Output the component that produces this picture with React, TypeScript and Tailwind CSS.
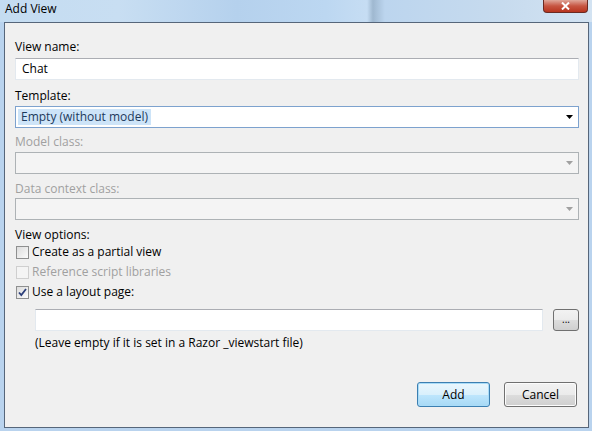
import React from "react";

const font = { fontFamily: '"Open Sans", "Noto Sans", sans-serif' };

const Label = ({ text, disabled }: { text: string; disabled?: boolean }) => (
  <div className={`h-[16px] leading-[16px] text-[12px] ${disabled ? "text-[#a0a0a0]" : "text-black"}`}>{text}</div>
);

const Arrow = ({ disabled }: { disabled?: boolean }) => (
  <svg width="7" height="4" viewBox="0 0 7 4" className="mr-[5px]">
    <path d="M0 0h7L3.5 4z" fill={disabled ? "#a0a0a0" : "#000"} />
  </svg>
);

const CheckBox = ({ checked, disabled }: { checked?: boolean; disabled?: boolean }) => (
  <div
    className={`w-[13px] h-[13px] border flex items-center justify-center ${
      disabled
        ? "border-[#cfcfcf] bg-[#f4f4f4]"
        : "border-[#8e8f8f] bg-[linear-gradient(135deg,#dcdcdc,#fbfbfb)]"
    }`}
  >
    {checked && (
      <svg width="9" height="9" viewBox="0 0 9 9">
        <path d="M1 4.5l2.3 2.6L8 1" stroke="#2c3f7a" strokeWidth="1.8" fill="none" />
      </svg>
    )}
  </div>
);

const App = () => {
  return (
    <div style={font} className="w-[592px] h-[431px] overflow-hidden flex flex-col bg-[#b9d3ee]">
      {/* title bar */}
      <div className="h-[22px] relative bg-[linear-gradient(90deg,#c4dcf1_0%,#c8def2_20%,#b5d1ed_40%,#bcd7f1_55%,#c6ddf3_62%,#9fb8d0_63%,#bcd5ee_65%,#c7dbee_85%,#d3e3f2_100%)]">
        <div className="absolute left-[5px] top-[1px] text-[12px] leading-[16px] text-black">Add View</div>
        <div className="absolute right-[4px] top-0 w-[45px] h-[13px] rounded-b-[4px] border border-t-0 border-[#6b2a22] bg-[linear-gradient(180deg,#e0a79a,#c75542_50%,#b8351f)] flex items-center justify-center">
          <svg width="9" height="8" viewBox="0 0 9 8">
            <path d="M1 0.5l7 7M8 0.5l-7 7" stroke="#fff" strokeWidth="2" />
          </svg>
        </div>
      </div>
      {/* client area */}
      <div className="ml-[4px] mr-[3px] h-[406px] border border-[#56667a] bg-[#f0f0f0] pl-[10px] pr-[9px] pt-[16px] text-[12px]">
        <Label text="View name:" />
        <div className="mt-[3px] h-[22px] border border-[#e3e9ef] border-t-[#abadb3] bg-white flex items-center pl-[6px] text-black">
          Chat
        </div>

        <div className="mt-[8px]">
          <Label text="Template:" />
        </div>
        <div className="mt-[2px] h-[22px] border border-[#7da2ce] bg-white flex items-center justify-between pl-[2px]">
          <span className="bg-[#cde4f8] text-[#1d3a5c] px-[3px] leading-[16px]">Empty (without model)</span>
          <Arrow />
        </div>

        <div className="mt-[6px]">
          <Label text="Model class:" disabled />
        </div>
        <div className="mt-[2px] h-[22px] border border-[#adb2b5] bg-[#f4f4f4] flex items-center justify-end">
          <Arrow disabled />
        </div>

        <div className="mt-[7px]">
          <Label text="Data context class:" disabled />
        </div>
        <div className="mt-[1px] h-[22px] border border-[#adb2b5] bg-[#f4f4f4] flex items-center justify-end">
          <Arrow disabled />
        </div>

        <div className="mt-[7px]">
          <Label text="View options:" />
        </div>
        <div className="mt-[2px] flex flex-col gap-[6px] pl-[1px]">
          <div className="flex items-center gap-[3px] h-[14px]">
            <CheckBox />
            <span>Create as a partial view</span>
          </div>
          <div className="flex items-center gap-[3px] h-[14px]">
            <CheckBox disabled />
            <span className="text-[#a0a0a0]">Reference script libraries</span>
          </div>
          <div className="flex items-center gap-[3px] h-[14px]">
            <CheckBox checked />
            <span>Use a layout page:</span>
          </div>
        </div>

        <div className="mt-[10px] pl-[20px] flex items-center gap-[10px]">
          <div className="flex-1 h-[22px] border border-[#e3e9ef] border-t-[#abadb3] bg-white" />
          <div className="w-[26px] h-[22px] rounded-[3px] border border-[#707070] bg-[linear-gradient(180deg,#f2f2f2_0%,#ebebeb_50%,#dddddd_51%,#cfcfcf_100%)] flex items-center justify-center text-[10px] leading-[10px] pb-[2px]">
            ...
          </div>
        </div>
        <div className="mt-[4px] pl-[20px] leading-[16px]">(Leave empty if it is set in a Razor _viewstart file)</div>

        <div className="mt-[31px] flex justify-end gap-[14px] pr-[2px]">
          <div className="w-[73px] h-[25px] rounded-[3px] border border-[#3c7fb1] bg-[linear-gradient(180deg,#eaf6fd_0%,#d9f0fc_50%,#bee6fd_51%,#a7d9f5_100%)] shadow-[inset_0_0_0_1px_#a9dcf8] flex items-center justify-center">
            Add
          </div>
          <div className="w-[73px] h-[25px] rounded-[3px] border border-[#707070] bg-[linear-gradient(180deg,#f2f2f2_0%,#ebebeb_50%,#dddddd_51%,#cfcfcf_100%)] shadow-[inset_0_0_0_1px_#fcfcfc] flex items-center justify-center">
            Cancel
          </div>
        </div>
      </div>
    </div>
  );
};

export default App;
